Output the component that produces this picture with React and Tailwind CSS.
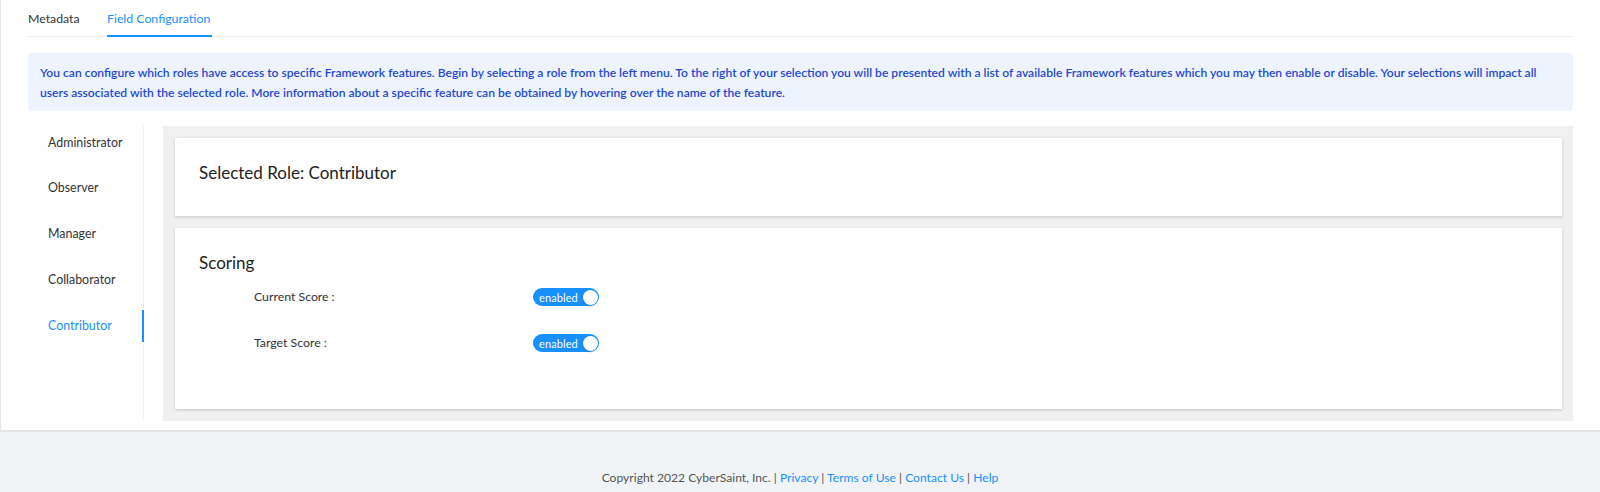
import React from "react";

const roles = ["Administrator", "Observer", "Manager", "Collaborator", "Contributor"];

function Toggle() {
  return (
    <div className="relative flex h-[18px] w-[66px] items-center rounded-full bg-[#1890ff] pl-[6px]">
      <span className="text-[11px] leading-none tracking-[0.1px] text-white" style={{ fontFamily: "Lato, sans-serif" }}>enabled</span>
      <span className="absolute right-[1.5px] top-[1.5px] h-[15px] w-[15px] rounded-full bg-white shadow-[0_1px_2px_rgba(0,0,0,0.2)]" />
    </div>
  );
}

export default function App() {
  return (
    <div className="w-[1600px] bg-white text-[#333]" style={{ fontFamily: "Lato, 'Open Sans', sans-serif" }}>
      <div className="border-b-2 border-l border-[#e4e6e8] pb-[9px] pl-[27px] pr-[27px]">
        {/* Tabs */}
        <div className="flex h-[37px] items-center border-b border-[#eeeeee] pt-[2px] text-[12.3px]">
          <div className="w-[79px] text-[#333]">Metadata</div>
          <div className="relative flex h-full items-center pr-[2px] text-[#1890ff]">
            Field Configuration
            <span className="absolute bottom-[-1px] left-0 right-0 h-[2px] bg-[#1890ff]" />
          </div>
        </div>

        {/* Info */}
        <div className="mt-[16px] h-[58px] rounded-[4px] bg-[#edf4ff] px-[12px] py-[10px] text-[12.1px] font-semibold leading-[19.5px] text-[#1f48d6]">
          You can configure which roles have access to specific Framework features. Begin by selecting a role from the left menu. To the right of your selection you will be presented with a list of available Framework features which you may then enable or disable. Your selections will impact all users associated with the selected role. More information about a specific feature can be obtained by hovering over the name of the feature.
        </div>

        {/* Content */}
        <div className="mt-[15px] flex h-[295px]">
          <div className="flex w-[116px] flex-col gap-[13.8px] border-r border-[#f0f0f0] pt-[1px]">
            {roles.map((r) => (
              <div
                key={r}
                className={
                  "relative flex h-[32px] items-center pl-[20px] text-[12.4px] " +
                  (r === "Contributor" ? "text-[#1890ff]" : "text-[#333]")
                }
              >
                {r}
                {r === "Contributor" && (
                  <span className="absolute right-[-1px] top-0 h-full w-[2px] bg-[#1890ff]" />
                )}
              </div>
            ))}
          </div>

          <div className="ml-[19px] flex flex-1 flex-col gap-[12px] bg-[#f0f0f0] py-[12px] pl-[12px] pr-[11px]">
            <div className="h-[78px] bg-white pl-[24px] pt-[23px] shadow-[0_1px_3px_rgba(0,0,0,0.18)]">
              <div className="text-[17px] leading-[24px] text-[#222]">Selected Role: Contributor</div>
            </div>
            <div className="flex-1 bg-white pl-[24px] pt-[23px] shadow-[0_1px_3px_rgba(0,0,0,0.18)]">
              <div className="text-[17px] leading-[24px] text-[#222]">Scoring</div>
              <div className="mt-[13px] flex flex-col gap-[28px] pl-[55px]">
                <div className="flex h-[18px] items-center">
                  <div className="w-[279px] text-[12.3px] text-[#333]">
                    Current Score<span className="ml-[3px]">:</span>
                  </div>
                  <Toggle />
                </div>
                <div className="flex h-[18px] items-center">
                  <div className="w-[279px] text-[12.3px] text-[#333]">
                    Target Score<span className="ml-[3px]">:</span>
                  </div>
                  <Toggle />
                </div>
              </div>
            </div>
          </div>
        </div>
      </div>

      {/* Footer */}
      <div className="flex h-[60px] justify-center bg-[#f0f4f7] pt-[37px] text-[12.1px] leading-[18px] text-[#555]">
        <span>
          Copyright 2022 CyberSaint, Inc. | <span className="text-[#1890ff]">Privacy</span> |{" "}
          <span className="text-[#1890ff]">Terms of Use</span> | <span className="text-[#1890ff]">Contact Us</span> |{" "}
          <span className="text-[#1890ff]">Help</span>
        </span>
      </div>
    </div>
  );
}
